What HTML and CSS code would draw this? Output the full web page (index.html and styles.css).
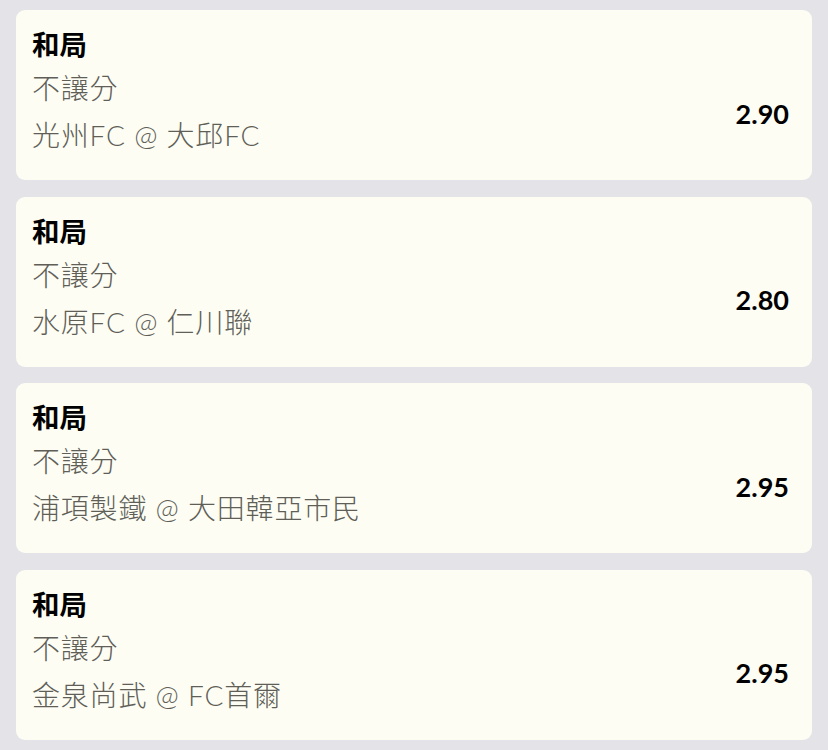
FILE: index.html
```html
<!DOCTYPE html>
<html lang="zh-Hant">
<head>
    <meta charset="UTF-8">
    <meta name="viewport" content="width=device-width, initial-scale=1.0">
    <title>投注選項</title>
    <link rel="stylesheet" href="styles.css">
</head>
<body>
    <div class="list">
        <div class="card">
            <div class="info">
                <div class="title">和局</div>
                <div class="sub">不讓分</div>
                <div class="match">光州FC @ 大邱FC</div>
            </div>
            <div class="odds">2.90</div>
        </div>
        <div class="card">
            <div class="info">
                <div class="title">和局</div>
                <div class="sub">不讓分</div>
                <div class="match">水原FC @ 仁川聯</div>
            </div>
            <div class="odds">2.80</div>
        </div>
        <div class="card">
            <div class="info">
                <div class="title">和局</div>
                <div class="sub">不讓分</div>
                <div class="match">浦項製鐵 @ 大田韓亞市民</div>
            </div>
            <div class="odds">2.95</div>
        </div>
        <div class="card">
            <div class="info">
                <div class="title">和局</div>
                <div class="sub">不讓分</div>
                <div class="match">金泉尚武 @ FC首爾</div>
            </div>
            <div class="odds">2.95</div>
        </div>
    </div>
</body>
</html>
```
FILE: styles.css
```css
body,html{
    margin: 0;
    height: 100%;
    background: #e4e4e8;
    font-family: Lato, "Noto Sans CJK TC", sans-serif;
}
.list{
    display: flex;
    flex-direction: column;
    gap: 16.5px;
    padding: 10px 16px;
}
.card{
    height: 170px;
    box-sizing: border-box;
    background: #fdfdf4;
    border-radius: 9px;
    display: flex;
    align-items: center;
    justify-content: space-between;
    padding: 0 23px 0 16px;
}
.info{
    align-self: flex-start;
    padding-top: 15px;
    display: flex;
    flex-direction: column;
}
.title{
    font-size: 27.5px;
    font-weight: bold;
    color: #000;
    line-height: 40px;
}
.sub,.match{
    font-size: 28px;
    font-weight: 300;
    letter-spacing: 0.8px;
    color: #5f5f58;
    line-height: 46px;
}
.match{
    line-height: 48px;
}
.odds{
    margin-top: 36px;
    font-size: 27px;
    font-weight: bold;
    color: #000;
}
```
